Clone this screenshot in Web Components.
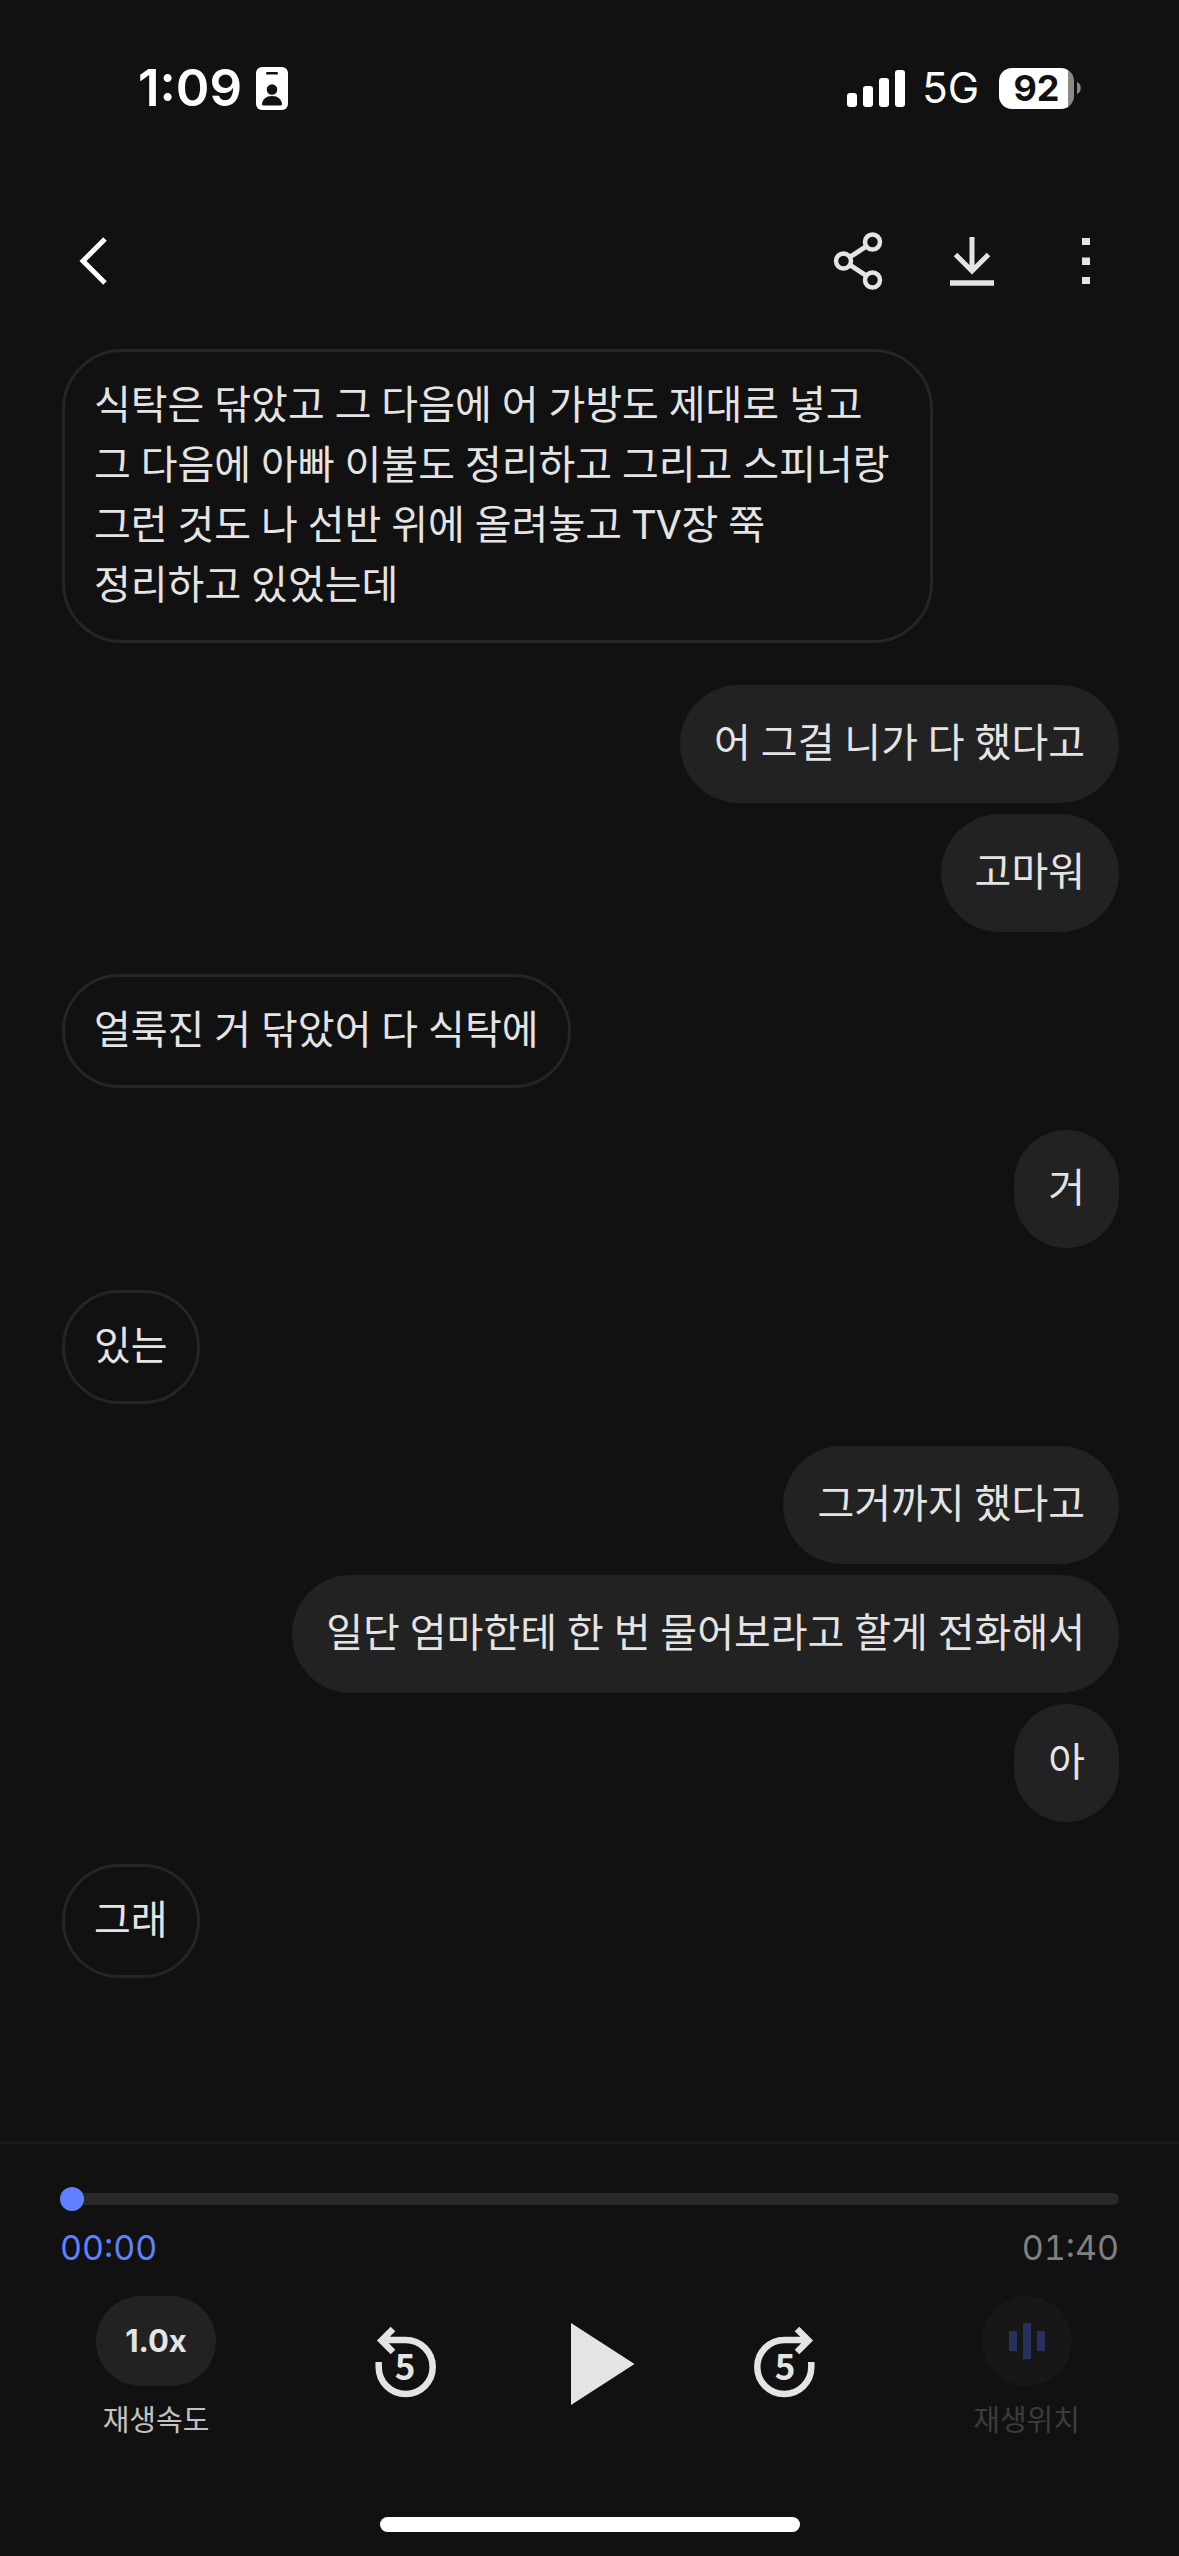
<!DOCTYPE html>
<html lang="ko">
<head>
<meta charset="utf-8">
<meta name="viewport" content="width=device-width">
<title>통화 녹음</title>
<style>
  html { background: #111; }
  body {
    margin: 0;
    min-height: 100vh;
    display: flex;
    flex-direction: column;
    background: #111;
    color: #e4e4e4;
    font-family: Roboto, "Noto Sans CJK KR", sans-serif;
  }
  chat-list { flex: 1; }
</style>
</head>
<body>
<status-bar></status-bar>
<top-bar></top-bar>
<chat-list>
  <chat-turn>
    <chat-bubble>식탁은 닦았고 그 다음에 어 가방도 제대로 넣고 그 다음에 아빠 이불도 정리하고 그리고 스피너랑 그런 것도 나 선반 위에 올려놓고 TV장 쭉 정리하고 있었는데</chat-bubble>
  </chat-turn>
  <chat-turn mine>
    <chat-bubble mine>어 그걸 니가 다 했다고</chat-bubble>
    <chat-bubble mine>고마워</chat-bubble>
  </chat-turn>
  <chat-turn>
    <chat-bubble>얼룩진 거 닦았어 다 식탁에</chat-bubble>
  </chat-turn>
  <chat-turn mine>
    <chat-bubble mine>거</chat-bubble>
  </chat-turn>
  <chat-turn>
    <chat-bubble>있는</chat-bubble>
  </chat-turn>
  <chat-turn mine>
    <chat-bubble mine>그거까지 했다고</chat-bubble>
    <chat-bubble mine>일단 엄마한테 한 번 물어보라고 할게 전화해서</chat-bubble>
    <chat-bubble mine>아</chat-bubble>
  </chat-turn>
  <chat-turn>
    <chat-bubble>그래</chat-bubble>
  </chat-turn>
</chat-list>
<audio-player></audio-player>

<script>
const define = (name, html) => {
  customElements.define(name, class extends HTMLElement {
    constructor() {
      super();
      this.attachShadow({ mode: 'open' }).innerHTML = html;
    }
  });
};

define('battery-level', `
  <style>
    :host { display: flex; align-items: center; gap: 3px; }
    .body {
      width: 75px; height: 41px; border-radius: 13px;
      background: linear-gradient(to right, #fff 69px, #8a8a8a 69px);
      color: #111; font: 700 36px/41px Inter, sans-serif;
      display: flex; justify-content: center;
    }
    svg { display: block; }
  </style>
  <div class="body"><slot></slot></div>
  <svg width="4" height="12" viewBox="0 0 4 12" aria-hidden="true"><path d="M0 0C5 2 5 10 0 12Z" fill="#8a8a8a"/></svg>
`);

define('status-bar', `
  <style>
    :host {
      display: flex; align-items: center; justify-content: space-between;
      height: 176px; padding: 0 98px 0 138px; box-sizing: border-box;
      color: #fff; font-family: Inter, sans-serif;
    }
    div { display: flex; align-items: center; }
    .left { gap: 14px; }
    .right { gap: 20px; }
    .signal { gap: 17px; }
    .time { font-size: 51px; font-weight: 600; line-height: 60px; }
    .net { font-size: 42px; line-height: 60px; }
    svg { display: block; }
  </style>
  <div class="left">
    <span class="time">1:09</span>
    <svg width="32" height="43" viewBox="0 0 32 43" aria-hidden="true">
      <rect width="32" height="43" rx="6" fill="#fff"/>
      <rect x="10" y="5" width="12" height="2.4" rx="1.2" fill="#111"/>
      <circle cx="16" cy="22.5" r="5.3" fill="#111"/>
      <path d="M6 37C6.500 32.500 10 29 16 29s9.500 3.500 10 8q0 1.500-1.500 1.500h-17Q6 38.500 6 37Z" fill="#111"/>
    </svg>
  </div>
  <div class="right">
    <div class="signal">
      <svg width="58" height="38" viewBox="0 0 58 38" fill="#fff" aria-hidden="true">
        <rect x="0" y="24" width="10" height="14" rx="3"/><rect x="16" y="17" width="10" height="21" rx="3"/>
        <rect x="32" y="9" width="10" height="29" rx="3"/><rect x="48" y="1" width="10" height="37" rx="3"/>
      </svg>
      <span class="net">5G</span>
    </div>
    <battery-level>92</battery-level>
  </div>
`);

define('icon-button', `
  <style>
    :host { display: block; color: #e4e4e4; }
    button {
      display: block; margin: 0; padding: 0; border: 0; background: none;
      color: inherit; cursor: pointer;
    }
    ::slotted(svg) { display: block; }
  </style>
  <button type="button"><slot></slot></button>
`);

define('top-bar', `
  <style>
    :host {
      display: flex; align-items: center; justify-content: space-between;
      height: 169px; padding: 0 57px; box-sizing: border-box;
    }
    nav { display: flex; gap: 42px; }
    .back { color: #fff; }
  </style>
  <icon-button class="back">
    <svg width="72" height="72" viewBox="0 0 72 72" role="img" aria-label="뒤로" fill="none" stroke="currentColor" stroke-width="5"><path d="M48 14 26 36l22 22"/></svg>
  </icon-button>
  <nav>
    <icon-button>
      <svg width="72" height="72" viewBox="0 0 72 72" role="img" aria-label="공유" fill="none" stroke="currentColor" stroke-width="4.500">
        <circle cx="21.500" cy="36" r="7.500"/><circle cx="50.500" cy="17" r="7.500"/><circle cx="50.500" cy="55" r="7.500"/>
        <path d="M28 32 44 21.500M28 40 44 50.500" stroke-width="5"/>
      </svg>
    </icon-button>
    <icon-button>
      <svg width="72" height="72" viewBox="0 0 72 72" role="img" aria-label="다운로드" fill="none" stroke="currentColor" stroke-width="5">
        <path d="M36 12v34M19.500 29.500 36 46l16.500-16.500"/><path d="M14 58h44" stroke-width="5.500"/>
      </svg>
    </icon-button>
    <icon-button>
      <svg width="72" height="72" viewBox="0 0 72 72" role="img" aria-label="더보기" fill="currentColor">
        <path d="M32 13h8v7h-8zM32 32.500h8v7.500h-8zM32 52h8v7h-8z"/>
      </svg>
    </icon-button>
  </nav>
`);

define('chat-bubble', `
  <style>
    :host {
      display: block; box-sizing: border-box; max-width: 871px;
      border: 3px solid #252525; border-radius: 60px;
      padding: 24px 29px;
      font-size: 40px; line-height: 60px; word-break: keep-all;
    }
    :host([mine]) { border: 0; background: #222; padding: 29px 34px; }
  </style>
  <slot></slot>
`);

define('chat-turn', `
  <style>
    :host { display: flex; flex-direction: column; align-items: flex-start; gap: 11px; }
    :host([mine]) { align-items: flex-end; }
  </style>
  <slot></slot>
`);

define('chat-list', `
  <style>
    :host {
      display: flex; flex-direction: column; gap: 42px;
      padding: 4px 60px 60px 62px; box-sizing: border-box;
    }
  </style>
  <slot></slot>
`);

define('labeled-control', `
  <style>
    :host { display: block; color: #c2c2c2; }
    button {
      display: flex; flex-direction: column; align-items: center; gap: 15px;
      margin: 0; padding: 0; border: 0; background: none; color: inherit;
      font: 400 29px/40px Roboto, "Noto Sans CJK KR", sans-serif;
    }
  </style>
  <button type="button"><slot name="face"></slot><span><slot></slot></span></button>
`);

define('audio-player', `
  <style>
    :host { display: block; border-top: 3px solid #1b1b1b; padding: 43px 60px 24px; }
    input {
      -webkit-appearance: none; appearance: none; display: block;
      width: 100%; height: 24px; margin: 0; background: none;
    }
    input::-webkit-slider-runnable-track { height: 12px; border-radius: 6px; background: #292929; }
    input::-webkit-slider-thumb {
      -webkit-appearance: none; width: 24px; height: 24px; margin-top: -6px;
      border-radius: 50%; background: #5f80ff;
    }
    .times {
      display: flex; justify-content: space-between; margin-top: 17px;
      font: 400 34px/40px Inter, sans-serif; color: #808080;
      font-variant-numeric: tabular-nums;
    }
    .now { color: #5f80ff; }
    .controls {
      display: flex; align-items: center; justify-content: space-between;
      margin-top: 28px; padding: 0 39px 0 36px;
    }
    .transport { display: flex; gap: 109px; }
    .pill {
      width: 120px; height: 90px; border-radius: 45px; background: #222;
      color: #e4e4e4; font: 700 31px/90px Inter, sans-serif; text-align: center;
    }
    .dim { color: #3c3c3c; }
    .circle {
      display: flex; align-items: center; justify-content: center;
      width: 90px; height: 90px; border-radius: 50%; background: #171717;
    }
    .home { width: 420px; height: 15px; margin: 76px auto 0; border-radius: 8px; background: #fff; }
    text { font: 700 35px "Noto Sans CJK KR", sans-serif; }
  </style>
  <input type="range" min="0" max="100" value="0" aria-label="재생 시간">
  <div class="times"><span class="now">00:00</span><span>01:40</span></div>
  <div class="controls">
    <labeled-control><span slot="face" class="pill">1.0x</span>재생속도</labeled-control>
    <div class="transport">
      <icon-button>
        <svg width="72" height="96" viewBox="0 0 72 96" role="img" aria-label="5초 뒤로">
          <path d="M8.700 41v5a27 27 0 1 0 27-27H11M23 8 11.500 19.500 23 31" fill="none" stroke="currentColor" stroke-width="6.500"/>
          <text x="35" y="59" text-anchor="middle" fill="currentColor">5</text>
        </svg>
      </icon-button>
      <icon-button>
        <svg width="88" height="96" viewBox="0 0 88 96" role="img" aria-label="재생"><path d="M20 2 83.500 43 20 84Z" fill="currentColor"/></svg>
      </icon-button>
      <icon-button>
        <svg width="72" height="96" viewBox="0 0 72 96" role="img" aria-label="5초 앞으로">
          <path d="M63.300 41v5a27 27 0 1 1-27-27H61M49 8 60.500 19.500 49 31" fill="none" stroke="currentColor" stroke-width="6.500"/>
          <text x="37" y="59" text-anchor="middle" fill="currentColor">5</text>
        </svg>
      </icon-button>
    </div>
    <labeled-control class="dim">
      <span slot="face" class="circle">
        <svg width="36" height="36" viewBox="0 0 36 36" fill="#26315f" aria-hidden="true"><path d="M0 8h8v20H0zM14 0h8v36h-8zM28 8h8v20h-8z"/></svg>
      </span>재생위치
    </labeled-control>
  </div>
  <div class="home"></div>
`);
</script>
</body>
</html>
